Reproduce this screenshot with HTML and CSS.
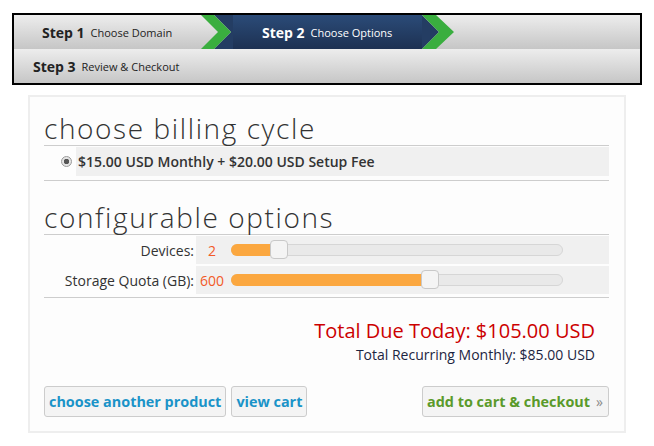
FILE: index.html
```html
<!DOCTYPE html>
<html>
<head>
<meta charset="utf-8">
<link rel="stylesheet" href="styles.css">
</head>
<body>
<div class="page">
  <div class="steps">
    <div class="step-row">
      <div class="step step-first">
        <span class="step-num">Step 1</span><span class="step-label">Choose Domain</span>
      </div>
      <svg class="chev" width="32" height="34" viewBox="0 0 32 34">
        <polygon points="13,0 32,0 32,34 13,34 30,17" fill="#243d63"/>
        <polygon points="0,0 13,0 30,17 13,34 0,34 17,17" fill="#3aae3f"/>
      </svg>
      <div class="step step-active">
        <span class="step-num">Step 2</span><span class="step-label">Choose Options</span>
      </div>
      <svg class="chev" width="33" height="34" viewBox="0 0 33 34">
        <polygon points="0,0 17,17 0,34" fill="#243d63"/>
        <polygon points="0,0 14,0 32,17 14,34 0,34 17,17" fill="#3aae3f"/>
      </svg>
    </div>
    <div class="step-row">
      <div class="step step-third">
        <span class="step-num">Step 3</span><span class="step-label">Review &amp; Checkout</span>
      </div>
    </div>
  </div>

  <div class="panel">
    <h2 class="section-title">choose billing cycle</h2>
    <div class="billing-row">
      <div class="radio-cell"><span class="radio"></span></div>
      <div class="billing-label">$15.00 USD Monthly + $20.00 USD Setup Fee</div>
    </div>
    <div class="rule"></div>

    <h2 class="section-title section-title-next">configurable options</h2>
    <div class="options">
      <div class="opt-label">Devices:</div>
      <div class="opt-cell">
        <span class="opt-value">2</span>
        <div class="slider">
          <div class="slider-fill" style="width: 40px"></div>
          <div class="slider-thumb" style="left: 38px"></div>
        </div>
      </div>
      <div class="opt-label">Storage Quota (GB):</div>
      <div class="opt-cell">
        <span class="opt-value">600</span>
        <div class="slider">
          <div class="slider-fill" style="width: 191px"></div>
          <div class="slider-thumb" style="left: 189px"></div>
        </div>
      </div>
    </div>
    <div class="rule rule-tight"></div>

    <div class="totals">
      <div class="total-due">Total Due Today: $105.00 USD</div>
      <div class="total-recurring">Total Recurring Monthly: $85.00 USD</div>
    </div>

    <div class="actions">
      <div class="action-group">
        <a class="btn btn-blue">choose another product</a>
        <a class="btn btn-blue">view cart</a>
      </div>
      <a class="btn btn-green">add to cart &amp; checkout <span class="raquo">»</span></a>
    </div>
  </div>
</div>
</body>
</html>
```
FILE: styles.css
```css
html, body {
  margin: 0;
  padding: 0;
  background: #fff;
  font-family: "Open Sans", "DejaVu Sans", sans-serif;
  color: #333;
}

.page {
  padding: 13px 0 0 12px;
}

.steps {
  width: 630px;
  box-sizing: border-box;
  border: 2px solid #000;
}

.step-row {
  display: flex;
  height: 34px;
  background: linear-gradient(#ededed, #c6c6c6);
}

.step {
  display: flex;
  align-items: center;
  gap: 6px;
  color: #222;
  white-space: nowrap;
}

.step-num {
  font-weight: 700;
  font-size: 14px;
}

.step-label {
  font-size: 11px;
}

.step-first {
  width: 187px;
  box-sizing: border-box;
  padding-left: 28px;
}

.step-active {
  width: 189px;
  box-sizing: border-box;
  padding-left: 29px;
  background: linear-gradient(#2b4b78, #1d3152);
  color: #fff;
}

.step-third {
  padding-left: 19px;
}

.chev {
  display: block;
  flex: none;
}

.panel {
  margin: 10px 0 0 16px;
  width: 598px;
  box-sizing: border-box;
  border: 2px solid #eeeeee;
  background: #fdfdfd;
  padding: 13px 15px 14px 14px;
}

.section-title {
  margin: 0;
  font-family: "Open Sans", sans-serif;
  font-weight: 300;
  font-size: 28px;
  letter-spacing: 1.6px;
  line-height: 34px;
  padding-top: 1px;
  color: #333;
  border-bottom: 1px solid #cdcdcd;
}

.section-title-next {
  margin-top: 18px;
}

.billing-row {
  display: grid;
  grid-template-columns: 32px 1fr;
  margin-top: 1px;
  height: 29px;
}

.radio-cell {
  display: flex;
  align-items: center;
  justify-content: flex-end;
  padding-right: 4px;
}

.radio {
  width: 9px;
  height: 9px;
  border-radius: 50%;
  border: 1px solid #9a9a9a;
  background: radial-gradient(circle, #555 0 2.5px, #e4e4e4 3px);
}

.billing-label {
  background: #f0f0f0;
  display: flex;
  align-items: center;
  padding-left: 2px;
  font-size: 14px;
  font-weight: 600;
  color: #333;
}

.rule {
  border-top: 1px solid #cdcdcd;
  margin-top: 4px;
}

.rule-tight {
  margin-top: 3px;
}

.options {
  display: grid;
  grid-template-columns: 150px 1fr;
  column-gap: 2px;
  row-gap: 2px;
  margin-top: 1px;
}

.opt-label {
  height: 28px;
  display: flex;
  align-items: center;
  justify-content: flex-end;
  font-size: 14px;
  color: #333;
}

.opt-cell {
  height: 28px;
  background: #f0f0f0;
  display: flex;
  align-items: center;
}

.opt-value {
  width: 32px;
  text-align: center;
  font-size: 14px;
  color: #f25a27;
}

.slider {
  position: relative;
  margin-left: 3px;
  width: 332px;
  height: 12px;
  box-sizing: border-box;
  border: 1px solid #d6d6d6;
  border-radius: 6px;
  background: #e9e9e9;
}

.slider-fill {
  position: absolute;
  left: -1px;
  top: -1px;
  height: 12px;
  border-radius: 6px 0 0 6px;
  background: #fba73f;
}

.slider-thumb {
  position: absolute;
  top: -5px;
  width: 18px;
  height: 19px;
  box-sizing: border-box;
  border: 1px solid #c8c8c8;
  border-radius: 4px;
  background: #f4f4f4;
}

.totals {
  text-align: right;
  padding-right: 14px;
  margin-top: 20px;
}

.total-due {
  font-size: 20px;
  color: #cc0000;
  line-height: 26px;
}

.total-recurring {
  font-size: 14px;
  color: #1c2541;
  line-height: 22px;
}

.actions {
  display: flex;
  justify-content: space-between;
  margin-top: 20px;
}

.action-group {
  display: flex;
  gap: 5px;
}

.btn {
  display: flex;
  align-items: center;
  height: 31px;
  box-sizing: border-box;
  padding: 0 4px;
  border: 1px solid #cccccc;
  border-radius: 3px;
  background: #f4f4f4;
  font-size: 14.4px;
  font-weight: 700;
  white-space: nowrap;
}

.btn-blue {
  color: #1a93c8;
}

.btn-green {
  color: #5a9a2a;
  padding-right: 5px;
}

.raquo {
  font-weight: 400;
  margin-left: 6px;
  color: #8a8a8a;
  font-size: 14px;
}
```
